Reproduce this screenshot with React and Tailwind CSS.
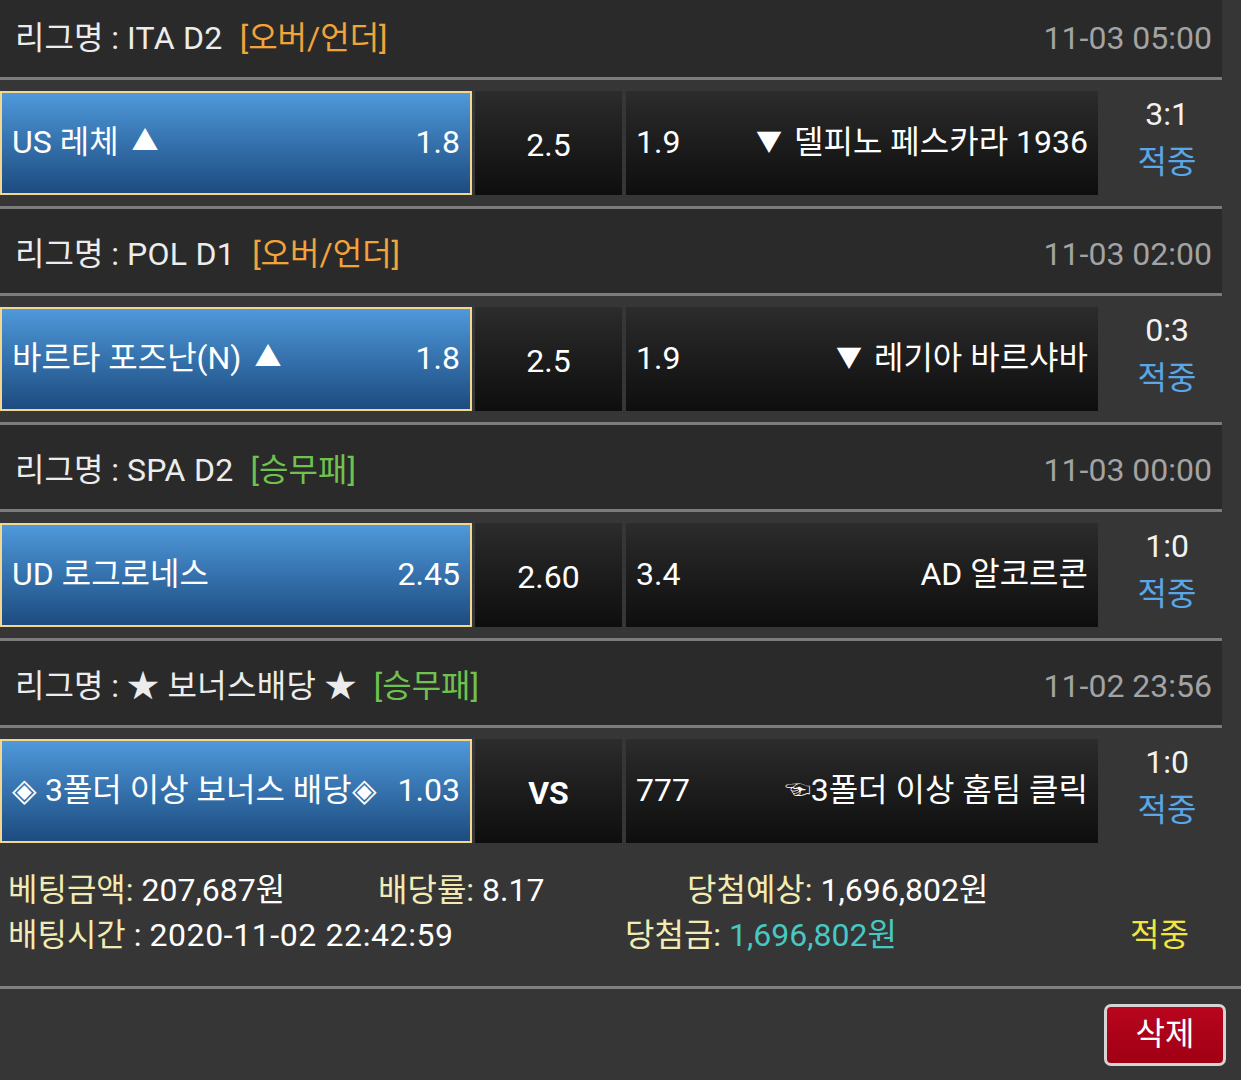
import React from "react";

const Up = () => <span className="ml-[13px] text-[27px]">▲</span>;
const Down = () => <span className="mr-[12px] text-[26px]">▼</span>;

const matches = [
  {
    league: "ITA D2",
    type: "[오버/언더]",
    typeColor: "text-[#f2a33a]",
    time: "11-03 05:00",
    home: "US 레체",
    up: true,
    homeOdd: "1.8",
    draw: "2.5",
    awayOdd: "1.9",
    away: "델피노 페스카라 1936",
    down: true,
    score: "3:1",
  },
  {
    league: "POL D1",
    type: "[오버/언더]",
    typeColor: "text-[#f2a33a]",
    time: "11-03 02:00",
    home: "바르타 포즈난(N)",
    up: true,
    homeOdd: "1.8",
    draw: "2.5",
    awayOdd: "1.9",
    away: "레기아 바르샤바",
    down: true,
    score: "0:3",
  },
  {
    league: "SPA D2",
    type: "[승무패]",
    typeColor: "text-[#6fc24f]",
    time: "11-03 00:00",
    home: "UD 로그로네스",
    homeOdd: "2.45",
    draw: "2.60",
    awayOdd: "3.4",
    away: "AD 알코르콘",
    score: "1:0",
  },
  {
    league: "★ 보너스배당 ★",
    type: "[승무패]",
    typeColor: "text-[#6fc24f]",
    time: "11-02 23:56",
    home: "◈ 3폴더 이상 보너스 배당◈",
    homeOdd: "1.03",
    draw: "VS",
    bold: true,
    awayOdd: "777",
    away: "3폴더 이상 홈팀 클릭",
    hand: true,
    score: "1:0",
  },
];

export default function App() {
  return (
    <div className="min-h-[1080px] overflow-hidden bg-[#363636] font-['Roboto','Noto_Sans_CJK_KR',sans-serif] text-[32px] leading-none text-white">
      <div className="-mt-[7px] w-[1222px]">
        {matches.map((m, i) => (
          <div key={i}>
            <div className="flex h-[84px] items-center justify-between bg-[#2a2a2a] pl-[15px] pr-[10px] pt-[6px]">
              <div className="flex items-center">
                <span className="text-[#ececec]">
                  리그명 : <span className="tracking-[0.3px]">{m.league}</span>
                </span>
                <span className={`ml-[17px] ${m.typeColor}`}>{m.type}</span>
              </div>
              <span className="text-[#a3a3a3]">{m.time}</span>
            </div>
            <div className="h-[3px] bg-[#7c7c7c]" />
            <div className="flex h-[126px] items-center">
              <div className="flex h-[104px] w-[472px] items-center justify-between border-2 border-[#f3d78e] bg-gradient-to-b from-[#4f99db] to-[#1d4c80] px-[10px] pb-[2px]">
                <span className="flex items-center">
                  {m.home}
                  {m.up && <Up />}
                </span>
                <span>{m.homeOdd}</span>
              </div>
              <div className="ml-[3px] flex h-[104px] w-[147px] items-center justify-center bg-gradient-to-b from-[#2c2c2c] to-[#0e0e0e] pt-[4px]">
                <span className={m.bold ? "font-bold" : ""}>{m.draw}</span>
              </div>
              <div className="ml-[4px] flex h-[104px] w-[472px] items-center justify-between bg-gradient-to-b from-[#2c2c2c] to-[#0e0e0e] pl-[10px] pr-[10px] pb-[2px]">
                <span>{m.awayOdd}</span>
                <span className="flex items-center">
                  {m.down && <Down />}
                  {m.hand && <span className="text-[26px]">☜</span>}
                  {m.away}
                </span>
              </div>
              <div className="flex flex-1 flex-col items-center gap-[16px] pl-[14px] pb-[10px]">
                <span className="text-[#f2f2f2]">{m.score}</span>
                <span className="text-[#5aa6e6]">적중</span>
              </div>
            </div>
            {i < matches.length - 1 && <div className="h-[3px] bg-[#7c7c7c]" />}
          </div>
        ))}
      </div>
      <div className="h-[132px] pl-[8px] pt-[14px] leading-[45px]">
        <div className="flex">
          <span className="w-[370px]">
            <span className="text-[#f2ebb4]">베팅금액:</span> 207,687원
          </span>
          <span className="w-[309px]">
            <span className="text-[#f2ebb4]">배당률:</span> 8.17
          </span>
          <span>
            <span className="text-[#f2ebb4]">당첨예상:</span> 1,696,802원
          </span>
        </div>
        <div className="flex">
          <span className="w-[617px]">
            <span className="text-[#f2ebb4]">배팅시간</span> :{" "}
            <span className="tracking-[0.6px]">2020-11-02 22:42:59</span>
          </span>
          <span className="w-[505px]">
            <span className="text-[#f2ebb4]">당첨금:</span>{" "}
            <span className="text-[#45c9c2]">1,696,802원</span>
          </span>
          <span className="text-[#f2e53f]">적중</span>
        </div>
      </div>
      <div className="h-[3px] bg-[#808080]" />
      <div className="flex justify-end pr-[15px] pt-[15px]">
        <button className="flex h-[62px] w-[122px] items-center justify-center rounded-[7px] border-[3px] border-[#d4d4d4] bg-gradient-to-b from-[#b8061e] to-[#a00014] pb-[2px] text-white">
          삭제
        </button>
      </div>
    </div>
  );
}
